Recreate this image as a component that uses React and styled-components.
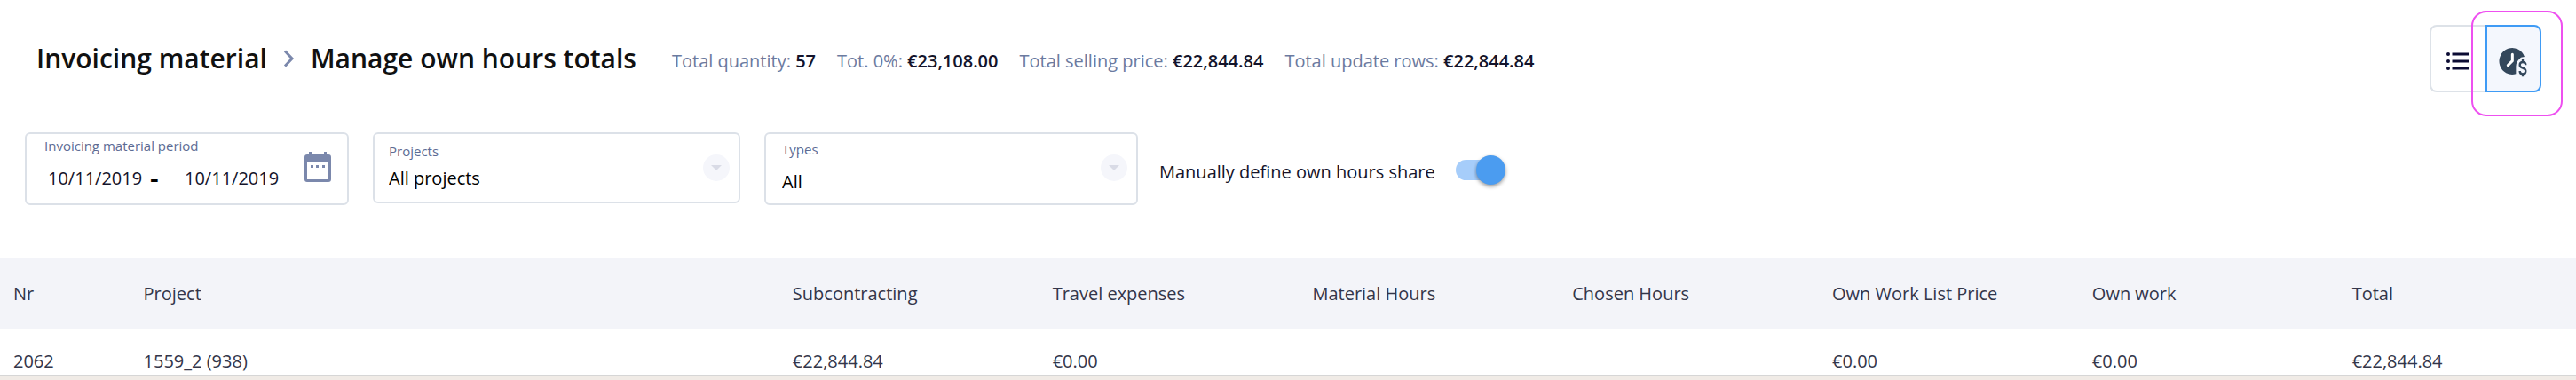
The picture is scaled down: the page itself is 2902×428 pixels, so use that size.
import React, { useState } from "react";
import styled, { createGlobalStyle } from "styled-components";

const GlobalStyle = createGlobalStyle`
    * {
        box-sizing: border-box;
    }
    body {
        margin: 0;
        background-color: #f0ebe6;
        color: #14142b;
        font-family: "Open Sans", "Noto Sans", sans-serif;
        font-size: 20px;
        line-height: 28px;
    }
    button, input, select {
        font: inherit;
        color: inherit;
    }
`

const Page = styled.main`
    background-color: #fff;
    border-bottom: 2px solid #d6d6d6;
`

const Header = styled.header`
    display: flex;
    align-items: center;
    padding: 28px 39px 0 41px;
`

const Breadcrumb = styled.nav`
    display: flex;
    align-items: center;
    gap: 18px;
    margin-right: 40px;
`

const Crumb = styled.a`
    color: #111;
    font-size: 30px;
    font-weight: 600;
    line-height: 40px;
    text-decoration: none;
    white-space: nowrap;
`

const PageTitle = styled.h1`
    margin: 0;
    color: #111;
    font-size: 30px;
    font-weight: 600;
    line-height: 40px;
    white-space: nowrap;
`

const Summary = styled.div`
    display: flex;
    gap: 24px;
    padding-top: 6px;
    white-space: nowrap;
`

const SummaryItem = styled.span`
    color: #6b7a9f;

    strong {
        color: #14142b;
        font-weight: 600;
    }
`

const ViewSwitch = styled.div`
    position: relative;
    display: flex;
    margin-left: auto;
`

const ViewButton = styled.button`
    display: flex;
    align-items: center;
    justify-content: center;
    width: 63px;
    height: 76px;
    padding: 6px 2px 0 0;
    cursor: pointer;
    border: 2px solid ${({ $active }) => ($active ? "#3f9bf5" : "#dde2e8")};
    border-right-width: ${({ $active }) => ($active ? "2px" : "0")};
    border-radius: ${({ $active }) => ($active ? "0 8px 8px 0" : "8px 0 0 8px")};
    background-color: ${({ $active }) => ($active ? "#f4f7fd" : "#fff")};
`

const Highlight = styled.div`
    position: absolute;
    top: -16px;
    right: -24px;
    bottom: -27px;
    left: 47px;
    border: 2px solid #ee50f0;
    border-radius: 17px;
    pointer-events: none;
`

const Filters = styled.section`
    display: flex;
    align-items: flex-start;
    gap: 27px;
    padding: 45px 28px 58px;
`

const Field = styled.div`
    position: relative;
    width: ${({ $width }) => $width};
    height: ${({ $height }) => $height || "82px"};
    padding: ${({ $padding }) => $padding};
    border: 2px solid #dce1e8;
    border-radius: 6px;
`

const Label = styled.label`
    display: block;
    color: #5c6b94;
    font-size: 15px;
    line-height: 22px;
`

const PeriodRow = styled.div`
    display: flex;
    align-items: center;
    margin-top: 12px;
    padding-left: 4px;
`

const DateInput = styled.input`
    width: 106px;
    height: 28px;
    padding: 0;
    border: 0;
    outline: 0;
    background: none;
`

const Dash = styled.span`
    width: 48px;
    padding-left: 9px;
    color: #000;
    font-size: 30px;
    font-weight: 600;
`

const CalendarButton = styled.button`
    position: absolute;
    top: 20px;
    right: 18px;
    display: flex;
    padding: 0;
    border: 0;
    background: none;
    cursor: pointer;
`

const Select = styled.select`
    display: block;
    width: 100%;
    height: 28px;
    margin-top: ${({ $gap }) => $gap};
    padding: 0;
    border: 0;
    outline: 0;
    background: none;
    color: #000;
    appearance: none;
`

const Caret = styled.span`
    position: absolute;
    top: 23px;
    right: 10px;
    display: flex;
    align-items: center;
    justify-content: center;
    width: 30px;
    height: 30px;
    border-radius: 50%;
    background-color: #f5f6fb;
    pointer-events: none;

    &::after {
        content: "";
        border: 6px solid transparent;
        border-top-color: #d9dbe6;
        border-bottom: 0;
    }
`

const ShareLabel = styled.label`
    display: flex;
    align-items: center;
    gap: 23px;
    height: 84px;
    margin-left: -3px;
    padding-top: 5px;
    white-space: nowrap;
    cursor: pointer;
`

const Switch = styled.input`
    appearance: none;
    display: flex;
    align-items: center;
    width: 46px;
    height: 23px;
    margin: 0 0 4px;
    border-radius: 12px;
    background-color: ${({ checked }) => (checked ? "#a6cdfa" : "#c9ced8")};
    cursor: pointer;

    &::before {
        content: "";
        flex: none;
        width: 33px;
        height: 33px;
        margin-left: ${({ checked }) => (checked ? "23px" : "-10px")};
        border-radius: 50%;
        background-color: ${({ checked }) => (checked ? "#4b9cf0" : "#fff")};
        box-shadow: 0 2px 4px rgba(0, 0, 0, 0.4);
    }
`

const Table = styled.table`
    width: 100%;
    border-collapse: collapse;
    table-layout: fixed;
    color: #33364a;
`

const Col = styled.col`
    width: ${({ $width }) => $width};
`

const HeadCell = styled.th`
    height: 80px;
    padding: 0 0 0 15px;
    background-color: #f3f4f9;
    font-weight: 400;
    text-align: left;
    white-space: nowrap;
`

const Cell = styled.td`
    height: 51px;
    padding: 20px 0 0 15px;
    white-space: nowrap;
`

const ChevronIcon = () => (
    <svg width="13" height="20" viewBox="0 0 13 20" fill="none" aria-hidden="true">
        <path d="M2 1.500l8 8.500-8 8.500" stroke="#7b88ac" strokeWidth="3" />
    </svg>
)

const ListIcon = () => (
    <svg width="26" height="22" viewBox="0 0 26 22" fill="#0b0b33" aria-hidden="true">
        <circle cx="2" cy="3" r="2" />
        <circle cx="2" cy="11" r="2" />
        <circle cx="2" cy="19" r="2" />
        <path d="M6.500 1.500h19v3h-19zM6.500 9.500h19v3h-19zM6.500 17.500h19v3h-19z" />
    </svg>
)

const ClockMoneyIcon = () => (
    <svg width="34" height="35" viewBox="0 0 102 105" fill="none" aria-hidden="true">
        <path
            d="M90 36A44 45 0 1 0 61 94V68C61 56 68 46 78 38z"
            fill="#33475b"
        />
        <path d="M49 28v22L34 65" stroke="#fff" strokeWidth="9" strokeLinecap="round" />
        <path
            d="M94 64c0-6-4-10-10-10s-10 4-10 10 4 8 10 10 10 4 10 10-4 10-10 10-10-4-10-10M84 45v9M84 94v9"
            stroke="#33475b"
            strokeWidth="7"
        />
    </svg>
)

const CalendarIcon = () => (
    <svg width="30" height="34" viewBox="0 0 30 34" aria-hidden="true">
        <path
            fill="#7b88ac"
            fillRule="evenodd"
            d="M5 0h3v3h14V0h3v3h2a3 3 0 0 1 3 3v25a3 3 0 0 1-3 3H3a3 3 0 0 1-3-3V6a3 3 0 0 1 3-3h2zM3 11v20h24V11zM7 15h3v3H7zM13 15h3v3h-3zM20 15h3v3h-3z"
        />
    </svg>
)

const totals = [
    { label: "Total quantity", value: "57" },
    { label: "Tot. 0%", value: "€23,108.00" },
    { label: "Total selling price", value: "€22,844.84" },
    { label: "Total update rows", value: "€22,844.84" },
]

const columns = [
    { title: "Nr", width: "5.05%" },
    { title: "Project", width: "25.2%" },
    { title: "Subcontracting", width: "10.09%" },
    { title: "Travel expenses", width: "10.09%" },
    { title: "Material Hours", width: "10.09%" },
    { title: "Chosen Hours", width: "10.09%" },
    { title: "Own Work List Price", width: "10.09%" },
    { title: "Own work", width: "10.09%" },
    { title: "Total", width: "auto" },
]

const rows = [
    ["2062", "1559_2 (938)", "€22,844.84", "€0.00", "", "", "€0.00", "€0.00", "€22,844.84"],
]

export default function App() {
    const [manual, setManual] = useState(true)
    const [view, setView] = useState("hours")

    return (
        <Page>
            <GlobalStyle />
            <Header>
                <Breadcrumb>
                    <Crumb href="#">Invoicing material</Crumb>
                    <ChevronIcon />
                    <PageTitle>Manage own hours totals</PageTitle>
                </Breadcrumb>
                <Summary>
                    {totals.map(({ label, value }) => (
                        <SummaryItem key={label}>
                            {label}: <strong>{value}</strong>
                        </SummaryItem>
                    ))}
                </Summary>
                <ViewSwitch>
                    <ViewButton aria-label="List" $active={view === "list"} onClick={() => setView("list")}>
                        <ListIcon />
                    </ViewButton>
                    <ViewButton aria-label="Own hours" $active={view === "hours"} onClick={() => setView("hours")}>
                        <ClockMoneyIcon />
                    </ViewButton>
                    <Highlight />
                </ViewSwitch>
            </Header>

            <Filters>
                <Field $width="365px" $padding="2px 20px">
                    <Label htmlFor="start">Invoicing material period</Label>
                    <PeriodRow>
                        <DateInput id="start" defaultValue="10/11/2019" />
                        <Dash>-</Dash>
                        <DateInput aria-label="Period end" defaultValue="10/11/2019" />
                    </PeriodRow>
                    <CalendarButton aria-label="Open calendar">
                        <CalendarIcon />
                    </CalendarButton>
                </Field>
                <Field $width="414px" $height="80px" $padding="8px 16px">
                    <Label htmlFor="projects">Projects</Label>
                    <Select id="projects" $gap="6px">
                        <option>All projects</option>
                    </Select>
                    <Caret />
                </Field>
                <Field $width="421px" $padding="6px 18px">
                    <Label htmlFor="types">Types</Label>
                    <Select id="types" $gap="12px">
                        <option>All</option>
                    </Select>
                    <Caret />
                </Field>
                <ShareLabel>
                    Manually define own hours share
                    <Switch type="checkbox" checked={manual} onChange={() => setManual(!manual)} />
                </ShareLabel>
            </Filters>

            <Table>
                <colgroup>
                    {columns.map(({ title, width }) => (
                        <Col key={title} $width={width} />
                    ))}
                </colgroup>
                <thead>
                    <tr>
                        {columns.map(({ title }) => (
                            <HeadCell key={title}>{title}</HeadCell>
                        ))}
                    </tr>
                </thead>
                <tbody>
                    {rows.map((row) => (
                        <tr key={row[0]}>
                            {row.map((value, i) => (
                                <Cell key={columns[i].title}>{value}</Cell>
                            ))}
                        </tr>
                    ))}
                </tbody>
            </Table>
        </Page>
    )
}
